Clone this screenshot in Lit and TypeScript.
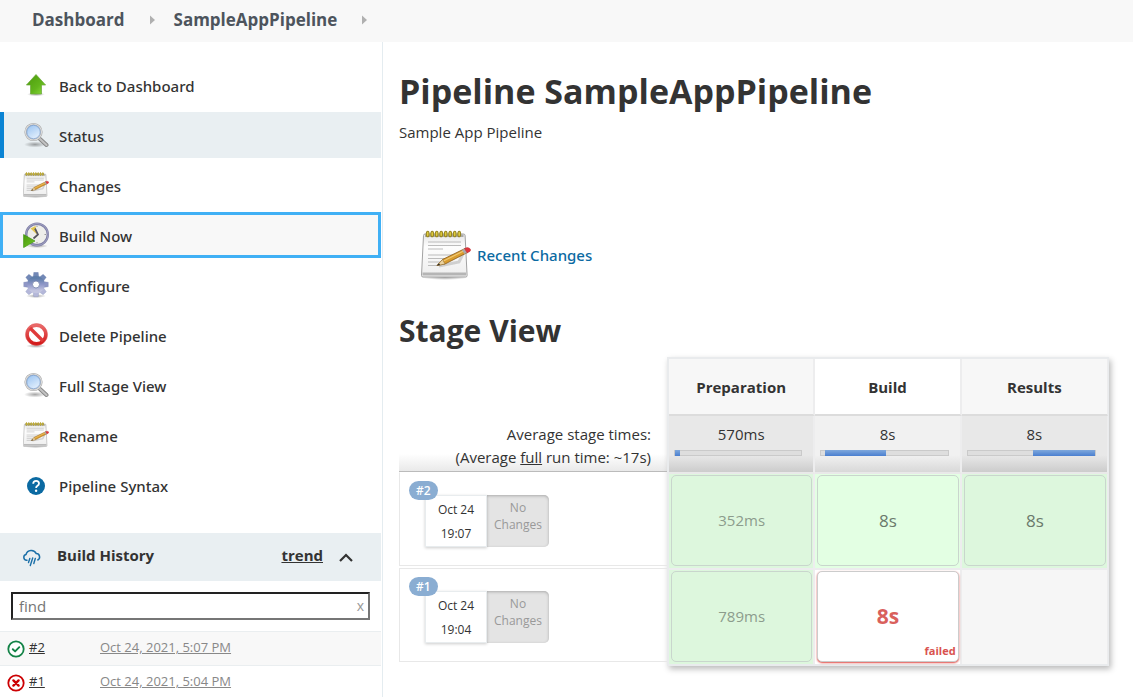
import { LitElement, html, svg, css, TemplateResult } from "lit";
import { customElement, state } from "lit/decorators.js";
import { classMap } from "lit/directives/class-map.js";

const gradients = html`
  <svg class="defs" width="0" height="0" aria-hidden="true">
    <defs>
      <linearGradient id="paper" x1="0" y1="0" x2="0" y2="1">
        <stop offset="0" stop-color="#e6e6e6" /><stop offset="0.3" stop-color="#fdfdfd" /><stop offset="1" stop-color="#ededed" />
      </linearGradient>
      <linearGradient id="green" x1="0" y1="0" x2="1" y2="1">
        <stop offset="0" stop-color="#4b9a0c" /><stop offset="0.6" stop-color="#62b51c" /><stop offset="1" stop-color="#8ede3e" />
      </linearGradient>
      <linearGradient id="lens" x1="0" y1="0" x2="0.6" y2="1">
        <stop offset="0" stop-color="#8fbdf0" /><stop offset="1" stop-color="#e6f1fd" />
      </linearGradient>
      <linearGradient id="gear" x1="0" y1="0" x2="0" y2="1">
        <stop offset="0" stop-color="#5f7eaa" /><stop offset="0.5" stop-color="#8f97c8" /><stop offset="1" stop-color="#c3c5e0" />
      </linearGradient>
      <linearGradient id="ban" x1="0" y1="0" x2="0" y2="1">
        <stop offset="0" stop-color="#ea6a6a" /><stop offset="1" stop-color="#d21a1a" />
      </linearGradient>
      <radialGradient id="shade">
        <stop offset="0" stop-color="#000" stop-opacity="0.35" /><stop offset="1" stop-color="#000" stop-opacity="0" />
      </radialGradient>
    </defs>
  </svg>
`;

const frame = (box: number, size: number, body: TemplateResult) => html`
  <svg width=${size} height=${size} viewBox="0 0 ${box} ${box}" fill="none" aria-hidden="true">${body}</svg>
`;

const coils = [7, 11.5, 16, 20.5, 25, 29.5, 34, 38.5];
const notepad = (size: number) => frame(50, size, svg`
  <ellipse cx="24" cy="47.500" rx="23" ry="2.500" fill="url(#shade)" />
  <path d="M4 4h38.500q1.500 0 1.600 1.500l2 40q0 1.500-1.500 1.500H2q-1.500 0-1.500-1.500l2-40Q2.600 4 4 4z" fill="url(#paper)" stroke="#a2a2a2" />
  <path d="M1.500 42.500h43.500v3H1.500z" fill="#b5b5b5" />
  <path d="M4 4.500h38.500V7H4z" fill="#aaa" />
  ${coils.map((x) => svg`<ellipse cx=${x - 0.3} cy="4" rx="1.400" ry="2.800" fill="#dfcb3c" stroke="#978522" stroke-width="1.100" />`)}
  <path d="M7 12h33M7 15.500h33M7 19h15M7 25h28M7 28.500h24M7 32h12M7 35.500h10" stroke="#bcbcbc" stroke-width="1.200" />
  <path d="M18 36l20-4 4-8" stroke="#000" stroke-opacity="0.15" stroke-width="3" />
  <path d="M16 35.500l5.500-6L44 18.500l2.500 4L24 34z" fill="#d99c2e" stroke="#8a5c1c" stroke-width="0.800" />
  <path d="M22.500 31L44.500 20" stroke="#f0c873" stroke-width="1.200" />
  <path d="M16 35.500l5.500-6L24 34z" fill="#ecd3a0" stroke="#8a6a32" stroke-width="0.500" />
  <path d="M16 35.500l2-2.200 1 1.700z" fill="#222" />
  <path d="M41 20l3-1.500 2.500 4-3 1.500z" fill="#aaa" />
  <path d="M43.500 18.500q3-1.700 5-.2t.5 3l-2.800 1.700z" fill="#e2343c" stroke="#b5343a" stroke-width="0.500" />
`);

const magnifier = frame(26, 26, svg`
  <ellipse cx="12" cy="22.500" rx="11" ry="3" fill="url(#shade)" />
  <path d="M17 17l6.500 6" stroke="#858585" stroke-width="4" stroke-linecap="round" />
  <path d="M17 17l6.500 6" stroke="#c2c2c2" stroke-width="2.200" stroke-linecap="round" />
  <circle cx="10.500" cy="10" r="8" fill="url(#lens)" stroke="#a8a8a8" stroke-width="2.200" />
  <circle cx="10.500" cy="10" r="8" stroke="#dedede" stroke-width="1.100" />
  <circle cx="10.500" cy="10" r="6.700" stroke="#7c9fce" stroke-width="0.700" />
`);

const upArrow = frame(26, 26, svg`
  <ellipse cx="13" cy="22.300" rx="9" ry="2" fill="url(#shade)" />
  <path d="M13 2.500L22.600 13H18.500v9H7.500v-9H3.400z" fill="url(#green)" stroke="#6aa63a" stroke-width="0.700" stroke-linejoin="round" />
`);

const clock = frame(26, 26, svg`
  <ellipse cx="14" cy="24" rx="11" ry="2" fill="url(#shade)" />
  <circle cx="14" cy="12.500" r="10.800" fill="#eeeeea" stroke="#7f7fa6" stroke-width="2.400" />
  <circle cx="14" cy="12.500" r="11" stroke="#aeaecb" stroke-width="0.700" />
  <path d="M14 12.500L7.500 6.500 12.500 4z" fill="#e3c64e" />
  <path d="M12 6.500l3 6-4.500 4" stroke="#55555f" stroke-width="1.700" />
  <path d="M14 3.500v1.500M23 12.500h-1.500M14 21.500V20" stroke="#999" />
  <path d="M0.600 12.500L12 19 .6 25.600z" fill="url(#green)" stroke="#3f9310" stroke-width="0.700" />
`);

const teeth = [0, 45, 90, 135, 180, 225, 270, 315];
const gear = frame(26, 26, svg`
  <ellipse cx="13" cy="24" rx="10" ry="2" fill="url(#shade)" />
  ${teeth.map((a) => svg`<path d="M10 5.500L10.800 .2h4.400L16 5.500z" fill=${a > 90 && a < 270 ? "#b4b7d9" : a === 90 || a === 270 ? "#8f97c6" : "#7288b6"} stroke="#7f8db5" stroke-width="0.300" transform="rotate(${a} 13 12.500)" />`)}
  <circle cx="13" cy="12.500" r="6.200" stroke="url(#gear)" stroke-width="5.200" />
  <circle cx="13" cy="12.500" r="3.500" stroke="#717faa" stroke-width="0.800" />
`);

const ban = frame(26, 26, svg`
  <ellipse cx="13" cy="24" rx="10" ry="2" fill="url(#shade)" />
  <circle cx="13.500" cy="12.500" r="9.300" fill="#fff" stroke="url(#ban)" stroke-width="3.400" />
  <path d="M7 6l13 13" stroke="#df3a3a" stroke-width="3.400" />
  <circle cx="13.500" cy="12.500" r="11" stroke="#d55" stroke-width="0.500" />
`);

const help = frame(26, 26, svg`
  <circle cx="13" cy="14" r="9" fill="#0b6aa2" />
  <path d="M10.200 11.700q0-2.900 2.900-2.900t2.900 2.600q0 1.400-1.500 2.400-1.400.9-1.400 2.200" stroke="#fff" stroke-width="1.800" />
  <circle cx="13.100" cy="18.800" r="1.200" fill="#fff" />
`);

const cloud = frame(20, 20, svg`
  <path d="M5 11.200H4.500A2.900 2.900 0 0 1 4 5.500 5.500 5.500 0 0 1 14.300 4.600 3.400 3.400 0 0 1 15.800 11" stroke="#1a6fa8" stroke-width="1.500" stroke-linecap="round" />
  <path d="M7.800 9.500l-1.300 4M10.700 9l-2.400 7.500M13.300 9.500l-1.500 5" stroke="#1a6fa8" stroke-width="1.400" stroke-linecap="round" />
`);

const chevron = frame(14, 14, svg`<path d="M1 11L7 5l6 6" stroke="#333" stroke-width="2.200" />`);
const passed = frame(18, 18, svg`
  <circle cx="9" cy="9" r="7.700" fill="#fff" stroke="#138347" stroke-width="1.800" />
  <path d="M5.800 9.200l2.300 2.200 4.200-4.200" stroke="#138347" stroke-width="1.900" stroke-linecap="round" stroke-linejoin="round" />
`);
const broken = frame(18, 18, svg`
  <circle cx="9" cy="9" r="7.700" fill="#fff" stroke="#cc0003" stroke-width="1.800" />
  <path d="M6.400 6.400l5.200 5.200M11.600 6.400l-5.200 5.200" stroke="#cc0003" stroke-width="2.400" stroke-linecap="round" />
`);
const crumbArrow = html`<svg width="6" height="10" viewBox="0 0 6 10" aria-hidden="true"><path d="M0 0.500l5 4.500-5 4.500z" fill="#b0b0b0" /></svg>`;

const tasks = [
  { label: "Back to Dashboard", icon: upArrow },
  { label: "Status", icon: magnifier, kind: "current" },
  { label: "Changes", icon: notepad(26) },
  { label: "Build Now", icon: clock, kind: "focused" },
  { label: "Configure", icon: gear },
  { label: "Delete Pipeline", icon: ban },
  { label: "Full Stage View", icon: magnifier },
  { label: "Rename", icon: notepad(26) },
  { label: "Pipeline Syntax", icon: help },
];

const builds = [
  { id: "#2", when: "Oct 24, 2021, 5:07 PM", icon: passed },
  { id: "#1", when: "Oct 24, 2021, 5:04 PM", icon: broken },
];

const stages = [
  { name: "Preparation", average: "570ms", from: 0, share: 4 },
  { name: "Build", average: "8s", from: 3, share: 48 },
  { name: "Results", average: "8s", from: 51, share: 49 },
];

const runs = [
  {
    id: "#2", day: "Oct 24", time: "19:07",
    cells: [{ text: "352ms", kind: "ok short" }, { text: "8s", kind: "ok" }, { text: "8s", kind: "ok" }],
  },
  {
    id: "#1", day: "Oct 24", time: "19:04",
    cells: [{ text: "789ms", kind: "ok short" }, { text: "8s", kind: "failed" }, { text: "", kind: "" }],
  },
];

@customElement("app-root")
export class AppRoot extends LitElement {
  @state() private query = "";

  static styles = css`
    :host {
      display: block;
      color: #333;
      background: #fff;
      font: 15px/23px "Open Sans", "Noto Sans", sans-serif;
    }
    * { box-sizing: border-box; }
    a { color: inherit; }
    svg { display: block; flex: none; }
    .defs { position: absolute; }
    .crumbs {
      display: flex;
      align-items: center;
      gap: 18px;
      height: 42px;
      padding: 0 32px 3px;
      background: #f8f8f8;
      color: #4d545d;
      font-size: 17px;
      font-weight: 700;
    }
    .crumbs a { text-decoration: none; }
    .crumbs svg { margin-left: 7px; }
    .page { display: grid; grid-template-columns: 383px minmax(0, 1fr); }
    .side { height: calc(100vh - 42px); overflow: hidden; padding-right: 1px; border-right: 1px solid #e4ecf0; }
    .tasks { display: flex; flex-direction: column; gap: 4px; padding: 20px 0 25px; }
    .task {
      display: flex;
      align-items: center;
      gap: 10px;
      height: 46px;
      padding-left: 23px;
      font-family: "Noto Sans", "Open Sans", sans-serif;
      font-weight: 500;
      text-decoration: none;
    }
    .task span { padding-top: 2px; }
    .current { background: #e9eff2; box-shadow: inset 4px 0 #0b84d4; }
    .focused { background: #f8f8f8; box-shadow: inset 0 0 0 3px #40b0f5; }
    .history-head {
      display: flex;
      align-items: center;
      height: 48px;
      padding: 0 28px 3px 22px;
      background: #e9eff2;
      font-weight: 700;
    }
    .history-head > svg { margin-top: 6px; }
    .history-head h2 { flex: 1; margin: 0 0 0 15px; font: inherit; }
    button { border: 0; background: none; font: inherit; color: inherit; padding: 0; }
    .fold { margin-left: 16px; padding-top: 2px; }
    .find {
      display: flex;
      align-items: center;
      height: 28px;
      margin: 11px;
      border: 2px solid;
      border-color: #222 #767676 #767676 #222;
    }
    .find input {
      flex: 1;
      min-width: 0;
      padding: 0 6px;
      border: 0;
      outline: 0;
      background: none;
      font: inherit;
      color: inherit;
    }
    .find input::placeholder { color: #757575; opacity: 1; }
    .find button { padding: 0 4px 2px; color: #999; font-size: 14px; }
    .builds { margin: 0; padding: 0; list-style: none; font-size: 13px; }
    .build {
      display: grid;
      grid-template-columns: 17px 66px 1fr;
      column-gap: 5px;
      height: 34px;
      padding: 4px 7px 0;
      border-top: 1px solid #eaeef0;
    }
    .build:first-child { background: #f8f8f8; }
    .build svg { margin-top: 4px; }
    .when { color: #888; }
    .main { padding: 26px 24px 0 16px; }
    h1 { margin: 0; font-size: 34px; line-height: 46px; font-weight: 700; }
    .about { margin: 7px 0 85px; }
    .recent {
      display: flex;
      align-items: center;
      gap: 6px;
      height: 52px;
      margin-left: 22px;
      color: #0b6aa2;
      font-family: "Noto Sans", "Open Sans", sans-serif;
      font-weight: 500;
    }
    .recent a { text-decoration: none; }
    .title { margin: 29px 0 5px; font-size: 30px; line-height: 42px; font-weight: 700; }
    .view { display: flex; align-items: flex-start; }
    .runs { flex: 0 0 268px; }
    .stage-box { flex: 1; min-width: 0; box-shadow: 2px 3px 6px #bbb; }
    .legend {
      height: 115px;
      padding: 66px 16px 0 0;
      text-align: right;
      border-bottom: 1px solid #bbb;
      background: linear-gradient(#fff, #fff 85%, #e9e9e9);
    }
    .run {
      display: flex;
      align-items: flex-start;
      height: 94px;
      margin-bottom: 2px;
      padding: 22px 0 0 25px;
      border: 1px solid #e8e8e8;
      border-right: 0;
      position: relative;
    }
    .run:nth-child(2) { border-top-color: transparent; }
    .tag {
      position: absolute;
      left: 9px;
      top: 8px;
      padding: 0 7px;
      border-radius: 10px;
      background: #8aadd2;
      color: #fff;
      font-size: 12px;
      line-height: 19px;
      font-weight: 600;
      text-decoration: none;
    }
    .date, .none { width: 62px; height: 52px; font-size: 12px; text-align: center; }
    .date { line-height: 24px; padding-top: 2px; border: 1px solid #e8ecee; box-shadow: 0 1px 3px #ccc; background: #fff; }
    .none {
      padding-top: 4px;
      line-height: 17px;
      color: #999;
      background: #e4e4e4;
      border-radius: 0 5px 5px 0;
      box-shadow: inset 0 1px 3px #aaa;
    }
    .stages {
      width: 100%;
      table-layout: fixed;
      border-collapse: separate;
      border-spacing: 0;
      border: 2px solid #e9ebed;
      border-right-width: 1px;
      background: #f6f6f6;
      text-align: center;
    }
    .stages th, .stages td { padding: 0; border-right: 2px solid #ededee; }
    .stages th:last-child, .stages td:last-child { border-right-width: 1px; }
    .stages th { height: 57px; padding-top: 2px; border-bottom: 2px solid #dcdcdc; font-weight: 700; background: #f7f7f7; }
    .stages th:nth-child(2) { background: #fff; }
    .stages .average {
      height: 58px;
      padding: 0 11px 10px 5px;
      border-bottom: 2px solid #e9e9e9;
      background: linear-gradient(#e8e8e8, #e8e8e8 70%, #ccc);
    }
    .stages .average:nth-child(2) { background: linear-gradient(#f1f1f1, #f1f1f1 70%, #d8d8d8); }
    .amount { display: block; margin-bottom: 4px; padding-left: 6px; }
    .track { height: 6px; background: #dedede; border: 1px solid #cacaca; }
    .fill { height: 6px; margin-top: -1px; background: linear-gradient(#7fa8dc, #4a7fd0); }
    .stages .cell { height: 96px; padding-top: 1px; vertical-align: top; border-bottom: 2px solid #ececee; }
    .stages tr:last-child .cell { height: 94px; border-bottom: 0; }
    .ok { background: #ddf7dd; }
    .ok:nth-child(2) { background: #e3ffe3; }
    .failed { background: #fff; }
    .result {
      display: grid;
      place-items: center;
      position: relative;
      height: 91px;
      margin: 0 1px 0 2px;
      border: 1px solid #c9d6cd;
      border-radius: 5px;
      color: #6b7a6c;
      font-size: 17px;
    }
    .short .result { color: #8c9c8c; font-size: 15px; }
    .failed .result {
      border-color: #ccc;
      box-shadow: 0 1px 2px #e04a44;
      background: #fff;
      color: #d9605c;
      font-size: 21px;
      font-weight: 700;
    }
    .note { position: absolute; right: 2px; bottom: 1px; font-size: 11px; line-height: 18px; color: #d9534f; }
  `;

  render() {
    return html`
      ${gradients}
      <nav class="crumbs" aria-label="Breadcrumb">
        <a href="#dashboard">Dashboard</a>${crumbArrow}
        <a href="#pipeline">SampleAppPipeline</a>${crumbArrow}
      </nav>
      <div class="page">
        <aside class="side">
          <nav class="tasks" aria-label="Tasks">
            ${tasks.map((t) => html`
              <a href="#task" class=${classMap({ task: true, current: t.kind === "current", focused: t.kind === "focused" })}>${t.icon}<span>${t.label}</span></a>
            `)}
          </nav>
          <div class="history-head">
            ${cloud}
            <h2>Build History</h2>
            <a href="#trend">trend</a>
            <button class="fold" aria-label="Collapse">${chevron}</button>
          </div>
          <div class="find">
            <input type="text" aria-label="Find builds" placeholder="find" .value=${this.query}
              @input=${(e: InputEvent) => (this.query = (e.target as HTMLInputElement).value)} />
            <button aria-label="Clear" @click=${() => (this.query = "")}>x</button>
          </div>
          <ul class="builds">
            ${builds.map((b) => html`
              <li class="build">${b.icon}<span><a href="#build">${b.id}</a></span><span><a class="when" href="#build">${b.when}</a></span></li>
            `)}
          </ul>
        </aside>
        <main class="main">
          <h1>Pipeline SampleAppPipeline</h1>
          <p class="about">Sample App Pipeline</p>
          <div class="recent">${notepad(50)}<a href="#changes">Recent Changes</a></div>
          <h2 class="title">Stage View</h2>
          <div class="view">
            <div class="runs">
              <div class="legend">Average stage times:<br />(Average <u>full</u> run time: ~17s)</div>
              ${runs.map((r) => html`
                <div class="run">
                  <a class="tag" href="#run">${r.id}</a>
                  <div class="date">${r.day}<br />${r.time}</div>
                  <div class="none">No<br />Changes</div>
                </div>
              `)}
            </div>
            <div class="stage-box">
              <table class="stages">
                <thead>
                  <tr>${stages.map((s) => html`<th scope="col">${s.name}</th>`)}</tr>
                </thead>
                <tbody>
                  <tr>
                    ${stages.map((s) => html`
                      <td class="average">
                        <span class="amount">${s.average}</span>
                        <div class="track"><div class="fill" style="width:${s.share}%;margin-left:${s.from}%"></div></div>
                      </td>
                    `)}
                  </tr>
                  ${runs.map((r) => html`
                    <tr>
                      ${r.cells.map((c) => html`
                        <td class="cell ${c.kind}">
                          ${c.text ? html`<div class="result">${c.text}${c.kind === "failed" ? html`<span class="note">failed</span>` : ""}</div>` : ""}
                        </td>
                      `)}
                    </tr>
                  `)}
                </tbody>
              </table>
            </div>
          </div>
        </main>
      </div>
    `;
  }
}
